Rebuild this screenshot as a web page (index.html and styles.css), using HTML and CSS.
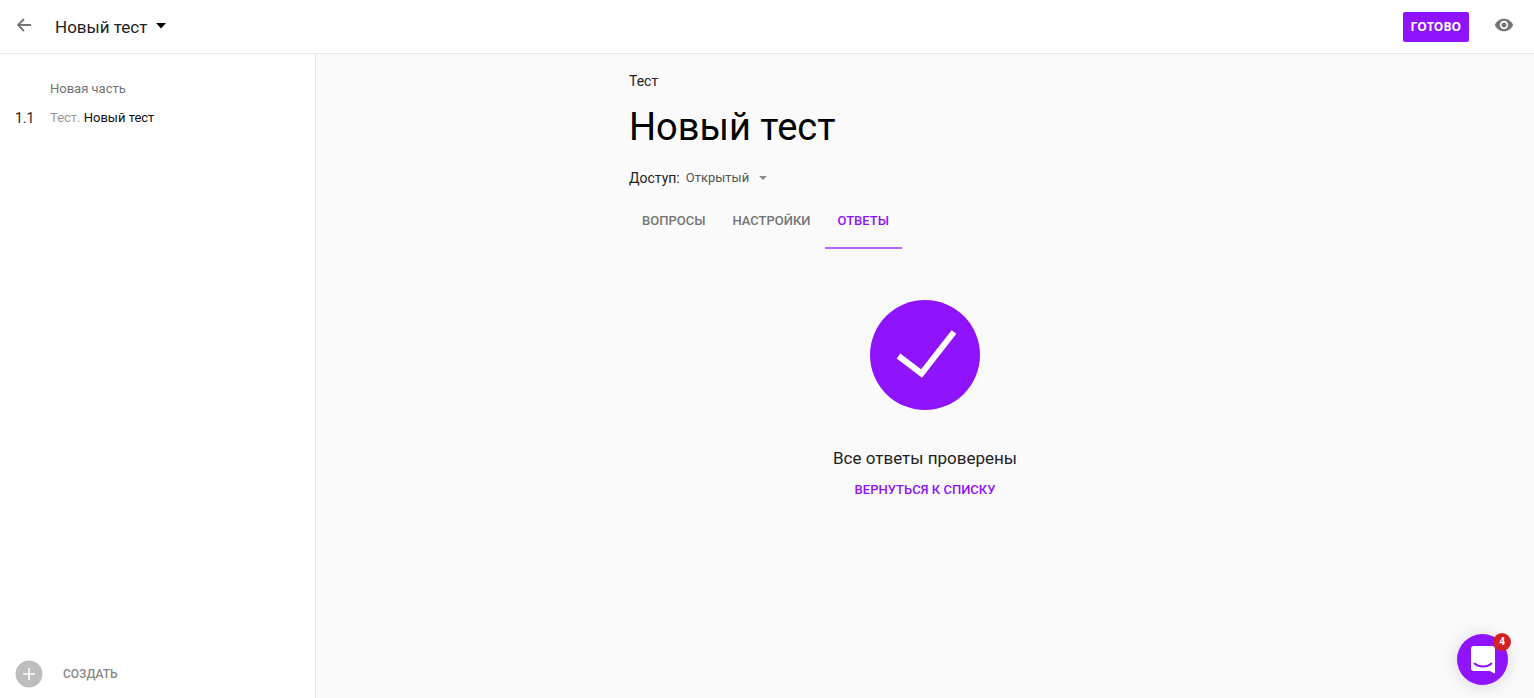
FILE: index.html
```html
<!DOCTYPE html>
<html lang="ru">
	<head>
		<meta charset="UTF-8">
		<title>Новый тест</title>
		<link rel="stylesheet" href="styles.css">
	</head>
	<body>

		<header class="topbar">
			<button class="icon-button back" type="button" aria-label="Назад">
				<svg width="14" height="14" viewBox="0 0 14 14"><path d="M14 7H1.5M7 1L1 7l6 6" fill="none" stroke="#777" stroke-width="1.8"/></svg>
			</button>
			<button class="course" type="button">
				Новый тест
				<svg width="10" height="6" viewBox="0 0 10 6"><path d="M0 0h10L5 5.5z" fill="#000"/></svg>
			</button>
			<button class="done" type="button">ГОТОВО</button>
			<button class="icon-button preview" type="button" aria-label="Просмотр">
				<svg width="20" height="20" viewBox="0 0 24 24"><path fill="#757575" d="M12 4.5C7 4.5 2.73 7.61 1 12c1.73 4.39 6 7.5 11 7.5s9.27-3.11 11-7.5c-1.73-4.39-6-7.5-11-7.5zM12 17c-2.76 0-5-2.24-5-5s2.24-5 5-5 5 2.24 5 5-2.24 5-5 5zm0-8c-1.66 0-3 1.34-3 3s1.34 3 3 3 3-1.34 3-3-1.34-3-3-3z"/></svg>
			</button>
		</header>

		<div class="layout">
			<nav class="sidebar">
				<div class="outline">
					<span class="part">Новая часть</span>
					<span class="number">1.1</span>
					<a class="lesson" href="#"><span>Тест.</span> Новый тест</a>
				</div>
				<button class="create" type="button">
					<svg width="28" height="28" viewBox="0 0 28 28"><circle cx="14" cy="14" r="13.5" fill="#bdbdbd"/><path d="M14 8v12M8 14h12" stroke="#fff" stroke-width="1.6"/></svg>
					СОЗДАТЬ
				</button>
			</nav>

			<main class="content">
				<div class="page">
					<div class="kind">Тест</div>
					<h1>Новый тест</h1>

					<div class="access">
						<label for="access">Доступ:</label>
						<span class="select">
							<select id="access">
								<option>Открытый</option>
							</select>
							<svg width="8" height="4" viewBox="0 0 8 4"><path d="M0 0h8L4 4z" fill="#8a8a8a"/></svg>
						</span>
					</div>

					<nav class="tabs">
						<a href="#">ВОПРОСЫ</a>
						<a href="#">НАСТРОЙКИ</a>
						<a class="active" href="#">ОТВЕТЫ</a>
					</nav>

					<div class="result">
						<svg width="110" height="110" viewBox="0 0 110 110"><circle cx="55" cy="55" r="55" fill="#9013fe"/><path d="M28.500 56L51.500 73.500 84 32" fill="none" stroke="#fff" stroke-width="6"/></svg>
						<p>Все ответы проверены</p>
						<a href="#">ВЕРНУТЬСЯ К СПИСКУ</a>
					</div>
				</div>
			</main>
		</div>

		<button class="chat" type="button" aria-label="Сообщения">
			<svg width="24" height="28" viewBox="0 0 24 28"><path d="M3 0h18a3 3 0 0 1 3 3v24.500L18.500 25H3a3 3 0 0 1-3-3V3a3 3 0 0 1 3-3z" fill="#fff"/><path d="M3.500 17.500c4.500 4 12.500 4 17 0" fill="none" stroke="#9013fe" stroke-width="1.800" stroke-linecap="round"/></svg>
			<span class="badge">4</span>
		</button>

	</body>
</html>
```
FILE: styles.css
```css
* {
	box-sizing: border-box;
}

body {
	display: flex;
	flex-direction: column;
	min-height: 100vh;
	margin: 0;
	background: #fafafa;
	color: #222;
	font-family: Roboto, "Liberation Sans", sans-serif;
	font-size: 14px;
	line-height: 20px;
}

button,
select {
	padding: 0;
	border: 0;
	background: none;
	color: inherit;
	font: inherit;
	cursor: pointer;
}

a {
	color: inherit;
	text-decoration: none;
}

svg {
	display: block;
}

/* top bar */

.topbar {
	display: flex;
	align-items: center;
	height: 54px;
	padding: 0 20px 0 17px;
	border-bottom: 1px solid #e8e8e8;
	background: #fff;
}

.icon-button {
	padding-bottom: 4px;
}

.course {
	display: flex;
	align-items: center;
	gap: 9px;
	margin-left: 24px;
	font-size: 17px;
}

.course svg {
	margin-bottom: 2px;
}

.done {
	height: 30px;
	margin: 0 25px 0 auto;
	padding: 0 8px;
	border-radius: 2px;
	background: #9013fe;
	color: #fff;
	font-family: "Open Sans", sans-serif;
	font-size: 12px;
	font-weight: 700;
}

/* sidebar */

.layout {
	display: flex;
	flex: 1;
}

.sidebar {
	display: flex;
	flex-direction: column;
	justify-content: space-between;
	width: 316px;
	padding: 25px 15px 10px;
	border-right: 1px solid #e4e4e4;
	background: #fff;
}

.outline {
	display: grid;
	grid-template-columns: 35px 1fr;
	row-gap: 9px;
}

.part {
	grid-column: 2;
	color: #757575;
	font-size: 13px;
}

.lesson {
	color: #111;
	font-size: 13px;
}

.lesson span {
	color: #999;
}

.create {
	display: flex;
	align-items: center;
	gap: 20px;
	color: #8a8a8a;
	font-size: 12px;
	font-weight: 500;
}

/* content */

.content {
	flex: 1;
}

.page {
	max-width: 592px;
	margin: 0 auto;
	padding-top: 17px;
}

h1 {
	margin: 12px 0 17px;
	color: #000;
	font-size: 38px;
	font-weight: 400;
	line-height: 48px;
}

.access {
	display: flex;
	gap: 6px;
}

.select {
	display: flex;
	align-items: center;
	color: #555;
	font-size: 13px;
}

.select select {
	appearance: none;
	padding-right: 9px;
}

.tabs {
	display: flex;
	gap: 1px;
	margin-top: 13px;
	color: #757575;
	font-size: 13px;
	font-weight: 500;
}

.tabs a {
	padding: 10px 13px 16px;
	border-bottom: 2px solid transparent;
}

.tabs .active {
	border-color: #b566ff;
	color: #9013fe;
}

.result {
	display: flex;
	flex-direction: column;
	align-items: center;
	padding-top: 51px;
}

.result p {
	margin: 36px 0 10px;
	font-size: 17px;
	line-height: 24px;
}

.result a {
	color: #9013fe;
	font-size: 13px;
	font-weight: 500;
}

/* chat launcher */

.chat {
	display: flex;
	align-items: center;
	justify-content: center;
	position: fixed;
	right: 26px;
	bottom: 13px;
	width: 51px;
	height: 51px;
	border-radius: 50%;
	background: #9013fe;
	box-shadow: 0 1px 16px rgba(0, 0, 0, 0.15);
}

.badge {
	position: absolute;
	top: -1px;
	right: -3px;
	width: 18px;
	height: 18px;
	border-radius: 50%;
	background: #d32222;
	color: #fff;
	font-size: 10px;
	font-weight: 700;
	line-height: 18px;
}
```
